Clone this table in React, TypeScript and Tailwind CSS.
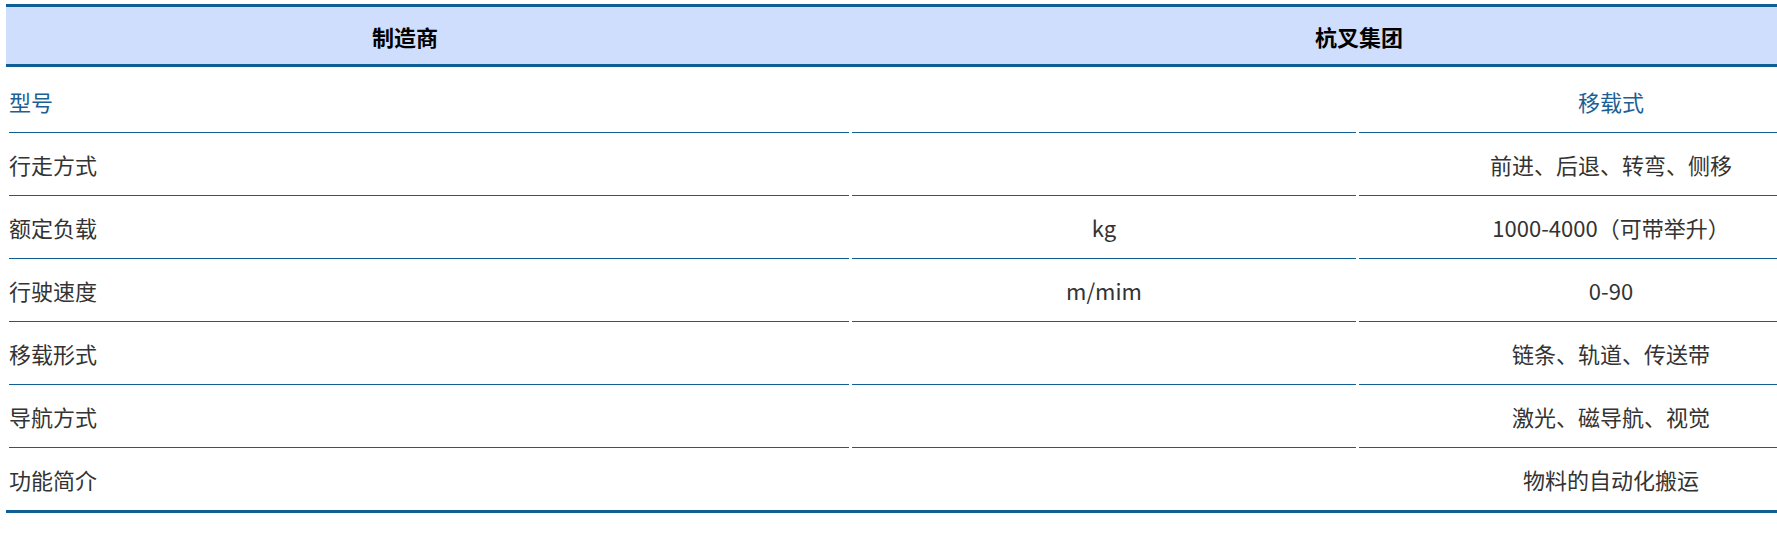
import React from "react";

interface SpecRow {
  label: string;
  unit: string;
  value: string;
  accent?: boolean;
}

const rows: SpecRow[] = [
  { label: "型号", unit: "", value: "移载式", accent: true },
  { label: "行走方式", unit: "", value: "前进、后退、转弯、侧移" },
  { label: "额定负载", unit: "kg", value: "1000-4000（可带举升）" },
  { label: "行驶速度", unit: "m/mim", value: "0-90" },
  { label: "移载形式", unit: "", value: "链条、轨道、传送带" },
  { label: "导航方式", unit: "", value: "激光、磁导航、视觉" },
  { label: "功能简介", unit: "", value: "物料的自动化搬运" },
];

const SpecTable: React.FC = () => {
  return (
    <div className="w-[1908px] ml-[6px] mt-[4px] border-y-[3px] border-[#0f5e94]">
      {/* Header */}
      <div className="flex h-[60px] items-center bg-[#cfdefd] border-b-[3px] border-[#0f5e94] font-bold text-black">
        <div className="w-[798px] text-center">制造商</div>
        <div className="w-[1110px] text-center">杭叉集团</div>
      </div>

      {/* Body */}
      <div className="flex flex-col pt-[3px] px-[3px] w-[1866px]">
        {rows.map((row, i) => {
          const last = i === rows.length - 1;
          const line = last ? "h-[62px]" : "h-[63px] border-b border-[#0f5e94]";
          const color = row.accent ? "text-[#1b5f96]" : "text-[#333333]";
          return (
            <div key={row.label} className={`flex gap-[3px] ${color}`}>
              <div className={`w-[840px] flex items-center ${line}`}>{row.label}</div>
              <div className={`w-[504px] flex items-center justify-center ${line}`}>{row.unit}</div>
              <div className={`w-[504px] flex items-center justify-center ${line}`}>{row.value}</div>
            </div>
          );
        })}
      </div>
    </div>
  );
};

export default function App() {
  return (
    <div
      className="w-full h-[540px] overflow-hidden bg-white text-[22px] leading-none"
      style={{ fontFamily: '"Noto Sans CJK SC", "Noto Sans", sans-serif' }}
    >
      <SpecTable />
    </div>
  );
}
